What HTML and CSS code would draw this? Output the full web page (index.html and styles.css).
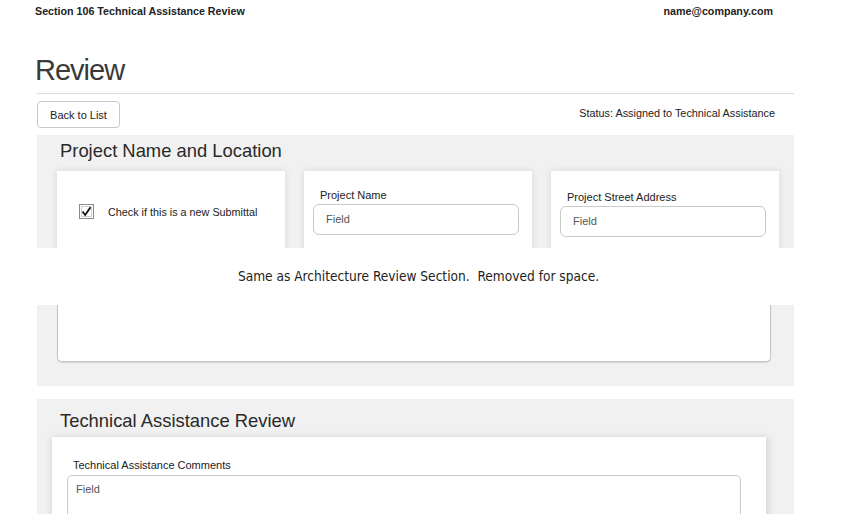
FILE: index.html
```html
<!DOCTYPE html>
<html lang="en">
<head>
<meta charset="utf-8">
<title>Review</title>
<link rel="stylesheet" href="styles.css">
</head>
<body>
<div class="page">
  <header class="topbar">
    <span class="app">Section 106 Technical Assistance Review</span>
    <span class="user">name@company.com</span>
  </header>
  <h1 class="title">Review</h1>
  <div class="rule"></div>
  <div class="toolbar">
    <button class="btn" type="button">Back to List</button>
    <span class="status">Status: Assigned to Technical Assistance</span>
  </div>

  <section class="panel panel-top">
    <h2 class="panel-title">Project Name and Location</h2>
    <div class="cards">
      <div class="card card-check">
        <label class="check">
          <span class="box"><svg width="13" height="13" viewBox="0 0 13 13"><path d="M2.5 6.5 L5.2 10 L10.5 2.2" fill="none" stroke="#111" stroke-width="1.8"/></svg></span>
          <span>Check if this is a new Submittal</span>
        </label>
      </div>
      <div class="card">
        <div class="label">Project Name</div>
        <div class="input">Field</div>
      </div>
      <div class="card card-alt">
        <div class="label">Project Street Address</div>
        <div class="input">Field</div>
      </div>
    </div>
  </section>

  <div class="note">Same as Architecture Review Section.&nbsp; Removed for space.</div>

  <section class="panel panel-bottom">
    <div class="box-end"></div>
  </section>

  <section class="panel panel-review">
    <h2 class="panel-title">Technical Assistance Review</h2>
    <div class="card card-wide">
      <div class="label label-wide">Technical Assistance Comments</div>
      <div class="textarea">Field</div>
    </div>
  </section>
</div>
</body>
</html>
```
FILE: styles.css
```css
* { box-sizing: border-box; }
html, body { margin: 0; padding: 0; background: #fff; }
body {
  font-family: "Liberation Sans", Arial, sans-serif;
  color: #222;
  overflow: hidden;
}
.page {
  margin-left: 35px;
  width: 759px;
}
.topbar {
  display: flex;
  justify-content: space-between;
  padding: 4px 21px 0 0;
  font-size: 10.7px;
  line-height: 14px;
  font-weight: bold;
  color: #222;
}
.title {
  margin: 35px 0 6px 0;
  font-size: 29px;
  line-height: 34px;
  font-weight: normal;
  letter-spacing: -1px;
  color: #3a3a3a;
}
.rule {
  margin-left: 2px;
  height: 1px;
  background: #dcdcdc;
}
.toolbar {
  display: flex;
  justify-content: space-between;
  align-items: flex-start;
  margin: 7px 0 0 2px;
  padding-right: 19px;
}
.btn {
  width: 83px;
  height: 27px;
  padding: 0;
  border: 1px solid #c8c8c8;
  border-radius: 4px;
  background: #fff;
  font-family: "Liberation Sans", Arial, sans-serif;
  font-size: 11px;
  color: #222;
}
.status {
  margin-top: 5px;
  font-size: 10.85px;
  line-height: 14px;
  color: #222;
}
.panel {
  margin-left: 2px;
  background: #f1f1f1;
}
.panel-top {
  margin-top: 7px;
  height: 113px;
  padding: 5px 15px 0 20px;
  overflow: hidden;
}
.panel-title {
  margin: 0;
  font-size: 18.4px;
  line-height: 22px;
  font-weight: normal;
  color: #2a2a2a;
}
.panel-top .panel-title { padding-left: 3px; }
.cards {
  display: grid;
  grid-template-columns: 228px 228px 228px;
  column-gap: 19px;
  margin-top: 9px;
}
.card {
  background: #fff;
  height: 100px;
  padding: 18px 13px 0 9px;
  box-shadow: 0 0 7px rgba(0,0,0,0.11);
}
.card-alt { padding-top: 20px; }
.card-check { padding: 33px 0 0 22px; }
.check {
  display: flex;
  align-items: center;
  gap: 14px;
  font-size: 10.8px;
  line-height: 14px;
  color: #222;
}
.box {
  width: 15px;
  height: 15px;
  border: 1px solid #8a8a8a;
  display: flex;
  align-items: center;
  justify-content: center;
  background: #fff;
  box-shadow: inset 0 0 0 1px #fff, inset 0 0 0 2px #d0d0d0;
}
.label {
  padding-left: 7px;
  margin-bottom: 2px;
  font-size: 11px;
  line-height: 13px;
  color: #222;
}
.input {
  height: 31px;
  border: 1px solid #c9c9c9;
  border-radius: 6px;
  padding-left: 12px;
  font-size: 11px;
  line-height: 29px;
  color: #555;
}
.note {
  margin-left: -35px;
  width: 837px;
  height: 57px;
  background: #fff;
  text-align: center;
  font-family: "DejaVu Sans Condensed", "Liberation Sans", sans-serif;
  font-size: 13.6px;
  line-height: 57px;
  color: #222;
}
.panel-bottom {
  padding: 0 23px 24px 20px;
}
.box-end {
  height: 57px;
  background: #fff;
  border: 1px solid #c6c6c6;
  border-top: 0;
  border-radius: 0 0 5px 5px;
  box-shadow: 0 1px 1px rgba(0,0,0,0.12);
}
.panel-review {
  margin-top: 13px;
  padding: 11px 28px 30px 15px;
}
.panel-review .panel-title { margin-bottom: 5px; padding-left: 8px; }
.card-wide {
  height: auto;
  padding: 22px 25px 30px 15px;
  box-shadow: 1px 1px 8px rgba(0,0,0,0.16);
}
.label-wide {
  padding-left: 6px;
  margin-bottom: 3px;
}
.textarea {
  height: 80px;
  border: 1px solid #c9c9c9;
  border-radius: 5px;
  padding: 6px 8px;
  font-size: 11px;
  line-height: 14px;
  color: #555;
}
```
